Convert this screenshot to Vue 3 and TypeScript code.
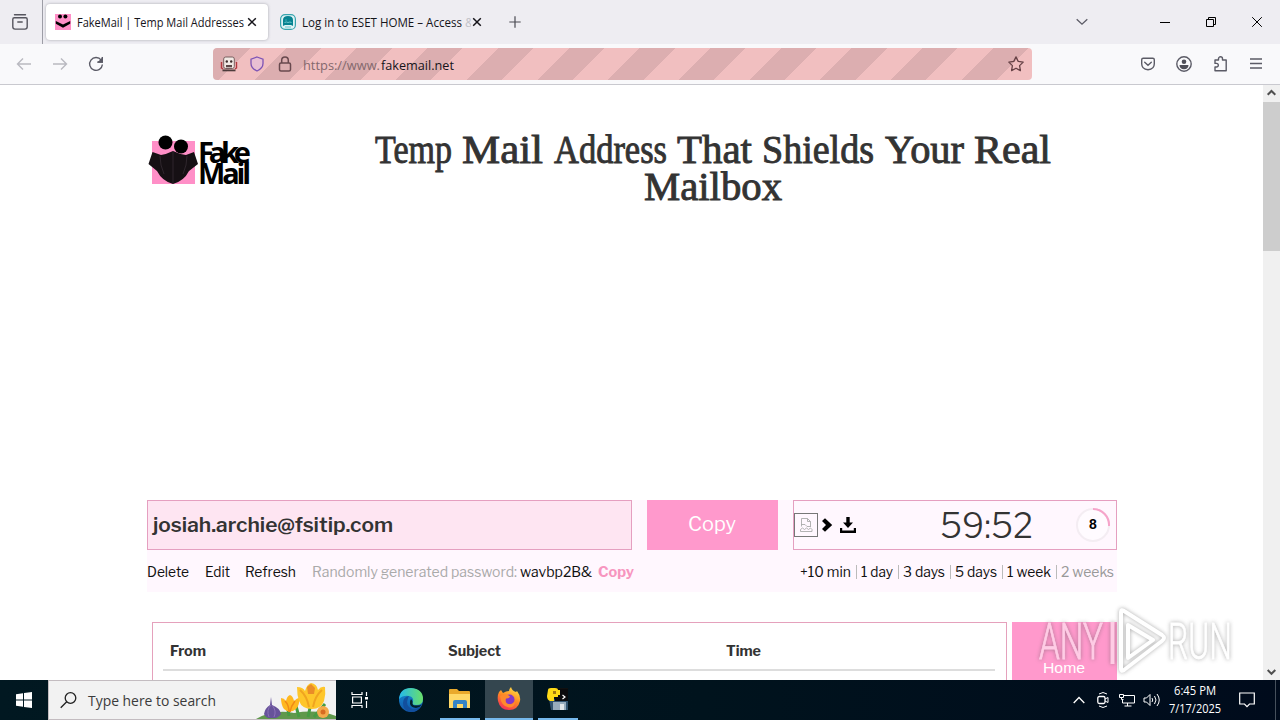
<script setup lang="ts">
import { h } from 'vue'

interface FitProps { t: string; w: number; b?: number; lh?: number }

// One line of text set to an exact advance width.
const Fit = (p: FitProps) =>
  h('svg', { width: p.w, height: p.lh ?? 20, style: 'display:block;flex:none;overflow:visible' }, [
    h('text', { x: 0, y: p.b ?? 15, textLength: p.w, lengthAdjust: 'spacingAndGlyphs', fill: 'currentColor' }, p.t),
  ])
Fit.props = ['t', 'w', 'b', 'lh']

const headline = [
  { t: 'Temp', w: 77 }, { t: 'Mail', w: 81 }, { t: 'Address', w: 113 }, { t: 'That', w: 75 },
  { t: 'Shields', w: 112 }, { t: 'Your', w: 79 }, { t: 'Real', w: 77 },
]
const actions = [{ t: 'Delete', w: 42 }, { t: 'Edit', w: 25 }, { t: 'Refresh', w: 51 }]
const periods = [
  { t: '+10 min', w: 51 }, { t: '1 day', w: 32 }, { t: '3 days', w: 42 },
  { t: '5 days', w: 42 }, { t: '1 week', w: 44 }, { t: '2 weeks', w: 53 },
]
const columns = [{ t: 'From', w: 36 }, { t: 'Subject', w: 53 }, { t: 'Time', w: 35 }]
</script>

<template>
  <div class="screen">
    <div class="tabs">
      <svg class="view" width="16" height="16" fill="none" stroke="#55555e" stroke-width="1.4">
        <path d="M2.5 .8h11M2.3 3.7h11.4q1.5 0 1.5 1.5v7.6q0 2.3-2.3 2.3H3.1q-2.3 0-2.3-2.3V5.2q0-1.5 1.5-1.5zM5.8 8h4.4" stroke-linecap="round" />
      </svg>
      <i class="sep"></i>
      <div class="tab active">
        <svg width="16" height="16">
          <rect width="16" height="16" fill="#ff8fc7" />
          <circle cx="5" cy="2.6" r="2" /><circle cx="10.4" cy="2.6" r="2" />
          <path d="M.8 7 8 10.500 15.200 7v2.800L8 13.800.8 9.800z" />
        </svg>
        <Fit t="FakeMail | Temp Mail Addresses" :w="167" />
        <svg class="x" width="10" height="10"><path d="M1.200 1.200l7.600 7.600M8.800 1.200 1.200 8.800" stroke="#15141a" stroke-width="1.500" /></svg>
      </div>
      <div class="tab second">
        <svg width="16" height="16">
          <rect x=".6" y=".6" width="14.8" height="14.800" rx="4.500" fill="#e0f3f5" stroke="#37a4ae" stroke-width="1.200" />
          <path d="M3 12V6q0-4 5-4t5 4v6l-2-1H5z" fill="#078391" />
          <path d="M4.500 8.500q2-1 3.500 0 2-1 3.500 0M5 13h6" stroke="#6bc6cd" stroke-width="1" fill="none" />
          <circle cx="6" cy="6" r=".8" fill="#46adb6" />
        </svg>
        <Fit t="Log in to ESET HOME – Access" :w="160" />
        <span class="faded">&amp;</span>
        <svg class="x" width="10" height="10"><path d="M1.200 1.200l7.600 7.600M8.800 1.200 1.200 8.800" stroke="#15141a" stroke-width="1.500" /></svg>
      </div>
      <svg class="plus" width="12" height="12"><path d="M6 .3v11.400M.3 6h11.400" stroke="#4a4a52" stroke-width="1.200" /></svg>
      <svg class="chev" width="12" height="8"><path d="M.7 1.200 6 6.200l5.300-5" fill="none" stroke="#5b5b66" stroke-width="1.300" /></svg>
      <svg class="win" width="10" height="10"><path d="M0 5.500h10" stroke="#000" /></svg>
      <svg class="win" width="10" height="10" fill="none" stroke="#000"><path d="M.5 2.500h7v7h-7zM2.500 2.500v-2h7v7h-2" /></svg>
      <svg class="win" width="10" height="10"><path d="M.2.2l9.600 9.600M9.800.2.2 9.800" stroke="#000" /></svg>
    </div>

    <div class="toolbar">
      <svg class="back" width="16" height="16" fill="none" stroke="#b9b9c0" stroke-width="1.400"><path d="M15 8H1.500M7 2.500 1.500 8 7 13.500" /></svg>
      <svg class="fwd" width="16" height="16" fill="none" stroke="#b9b9c0" stroke-width="1.400"><path d="M1 8h13.500M9 2.500 14.500 8 9 13.500" /></svg>
      <svg class="reload" width="16" height="16" fill="none" stroke="#5b5b66" stroke-width="1.400"><path d="M13.200 4.200A6.400 6.400 0 1 0 14.400 8.500M14.300 1v5H9.400" /><path d="M14.300 2.500V6h-3.500z" fill="#5b5b66" /></svg>
      <div class="url">
        <svg class="robot" width="18" height="16">
          <path d="M1.500 6v6l1.500 1M16.500 6v6l-1.500 1" stroke="#b3393e" stroke-width="1.400" fill="none" />
          <rect x="3.700" y="1" width="10.600" height="11.500" rx="2" fill="#f1e9e4" stroke="#6b5555" stroke-width=".9" />
          <circle cx="6.800" cy="5.500" r="1.200" fill="#3c2b2b" /><circle cx="11.200" cy="5.500" r="1.200" fill="#3c2b2b" />
          <path d="M6 9h6v2.300H6z" fill="#5d4747" /><path d="M2.500 13.500h13v1.800h-13z" fill="#4d3b3b" />
        </svg>
        <svg class="shield" width="14" height="16" fill="#e9bfd3" stroke="#7d54b5" stroke-width="1.300"><path d="M7 1l6 2.200v4.300q0 4.700-6 7.500-6-2.800-6-7.500V3.200z" /></svg>
        <svg class="lock" width="14" height="16" fill="none" stroke="#68494e" stroke-width="1.500"><rect x="1.500" y="7" width="11" height="8" rx="1.500" /><path d="M3.700 7V4.300a3.300 3.300 0 0 1 6.600 0V7" /></svg>
        <Fit class="scheme" t="https://www." :w="77" :b="16" />
        <Fit class="host" t="fakemail.net" :w="73" :b="16" />
        <svg class="star" width="16" height="16" fill="none" stroke="#674347" stroke-width="1.300" stroke-linejoin="round"><path d="M8 .9l2.200 4.500 5 .7-3.600 3.500.8 5L8 12.200l-4.400 2.400.8-5L.8 6.100l5-.7z" /></svg>
      </div>
      <svg class="pocket" width="14" height="16" fill="none" stroke="#5b5b66" stroke-width="1.400"><path d="M2.200 2.300h9.600q1.500 0 1.500 1.500v4q0 5.500-6.300 6-6.300-.5-6.300-6v-4q0-1.500 1.500-1.500zM3.700 6.300 7 9.300l3.300-3" stroke-linecap="round" /></svg>
      <svg class="account" width="16" height="16"><circle cx="8" cy="8" r="7.200" fill="none" stroke="#5b5b66" stroke-width="1.400" /><circle cx="8" cy="5.800" r="2.300" fill="#4e4e58" /><path d="M3.500 9h9q0 4-4.500 4.300Q3.500 13 3.500 9z" fill="#4e4e58" /></svg>
      <svg class="puzzle" width="15" height="16" fill="none" stroke="#5b5b66" stroke-width="1.400" stroke-linejoin="round"><path d="M5.500 4V2.800a2 2 0 0 1 4 0V4h3.700v10.800H2V11h1.500a1.800 1.800 0 0 0 0-3.600H2V4z" /></svg>
      <svg class="menu" width="12" height="11"><path d="M0 1h12M0 5.500h12M0 10h12" stroke="#5b5b66" stroke-width="1.300" /></svg>
    </div>

    <div class="viewport">
      <main class="page">
        <header>
          <svg class="logo" width="105" height="52">
            <rect x="5" y="6" width="43" height="43" fill="#ff8fc7" />
            <path d="M5.500 17 14 20Q20 19 26 16q6 3 13 4l8-3 4 12-9 7q-5 10-16 13-11-3-16-13L1.500 29z" fill="#161014" />
            <path d="M26 17v31M13 21q0 9 4 18M40 21q0 9-4 18" stroke="#3a2f36" stroke-width=".7" fill="none" />
            <circle cx="18.500" cy="7.500" r="7" /><circle cx="34" cy="11.500" r="7" />
            <g class="brand">
              <text x="51" y="28" textLength="53">Fake</text>
              <text x="51" y="49" textLength="53">Mail</text>
            </g>
          </svg>
          <h1>
            <span class="line"><Fit v-for="w in headline" :key="w.t" :t="w.t" :w="w.w" :lh="37" :b="32" /></span>
            <span class="line"><Fit t="Mailbox" :w="138" :lh="37" :b="32" /></span>
          </h1>
        </header>

        <section class="mailbox">
          <div class="controls">
            <div class="address"><Fit t="josiah.archie@fsitip.com" :w="240" :lh="30" :b="22" /></div>
            <div class="copy"><Fit t="Copy" :w="48" :lh="30" :b="21" /></div>
            <div class="timer">
              <svg class="qr" width="25" height="25" fill="none">
                <rect x=".5" y=".5" width="23" height="23" stroke="#777" />
                <path d="M7.500 13.500v-8h6l3 3v5M13.500 5.500v3h3M7 11.500h4l2 2h4M6.500 18.500v-2l2-1.500 2 1.500 2-1.500 2 1.500 2-1.500 1.500 1.500v2z" stroke="#aaa" stroke-width=".9" />
              </svg>
              <svg class="arrow" width="12" height="14"><path d="M1 3 4 .3 11.200 7 4 13.700 1 11l4-4z" /></svg>
              <svg class="load" width="16" height="16"><path d="M6.300 0h3.400v5.500H13L8 11 3 5.500h3.300zM0 11h2.200v2.500h11.600V11H16v5H0z" /></svg>
              <div class="clock"><Fit t="59:52" :w="93" :lh="40" :b="33" /></div>
              <svg class="ring" width="36" height="36">
                <circle cx="18" cy="18" r="16" fill="#fffbff" stroke="#f4edf3" stroke-width="2" />
                <path d="M18 2a16 16 0 0 1 16 17" fill="none" stroke="#f6a4ca" stroke-width="2" />
                <text x="18" y="22.300" text-anchor="middle">8</text>
              </svg>
            </div>
          </div>
          <div class="links">
            <Fit v-for="a in actions" :key="a.t" :t="a.t" :w="a.w" />
            <Fit class="muted" t="Randomly generated password:" :w="205" />
            <Fit class="password" t="wavbp2B&amp;" :w="72" />
            <Fit class="recopy" t="Copy" :w="36" />
            <div class="periods">
              <template v-for="(p, i) in periods" :key="p.t">
                <i v-if="i"></i><Fit :t="p.t" :w="p.w" />
              </template>
            </div>
          </div>
        </section>

        <section class="inbox">
          <div class="table">
            <div class="row"><div v-for="c in columns" :key="c.t"><Fit :t="c.t" :w="c.w" /></div></div>
          </div>
          <nav><Fit t="Home" :w="42" /></nav>
        </section>
      </main>
      <div class="scroll">
        <svg width="17" height="17"><path d="M4.700 9.800 8.500 6l3.800 3.800" fill="none" stroke="#505050" stroke-width="2" /></svg>
        <i></i>
        <svg class="down" width="17" height="17"><path d="M4.700 7l3.800 3.800L12.300 7" fill="none" stroke="#505050" stroke-width="2" /></svg>
      </div>
    </div>

    <div class="taskbar">
      <div class="start"><svg width="16" height="16" fill="#fff"><path d="M0 2.300 7 1.300V7.600H0zM8 1.100 16 0v7.600H8zM0 8.500h7v6.300l-7-1zM8 8.500h8V16l-8-1.100z" /></svg></div>
      <div class="search">
        <svg class="glass" width="17" height="17" fill="none" stroke="#222" stroke-width="1.300"><circle cx="10.500" cy="6" r="5.300" /><path d="M6.700 9.800.7 15.800" /></svg>
        <Fit t="Type here to search" :w="128" :b="16" />
        <svg class="flowers" width="80" height="38">
          <path d="M0 38q18-10 38-6 24-4 42 3v3z" fill="#60984c" />
          <path d="M33 35 31 23M52 36l3-14M43 36 40 25M58 36l11-13" stroke="#469c43" stroke-width="3" />
          <path d="M15 16l1 8q8 3 9 9-3 5-9 4-6 1-8-4 1-6 6-9z" fill="#67529a" /><path d="M15 24q-5 5-2 12M16 24q5 6 2 12" stroke="#8a70b7" fill="none" />
          <path d="M25 17q3 0 5 3 1-5 4-6 3 1 4 6 3-3 5-3 1 7-3 11-6 5-12 0-3-4-3-11z" fill="#ffb820" /><path d="M29 20q4 4 4 11M39 20q-4 5-5 11" stroke="#ef8a17" stroke-width="1.500" fill="none" />
          <path d="M41 6q6 0 8 4 2-7 6-8 6 1 7 7 3-4 7-3 1 7-1 14-3 8-12 8-10 0-13-8-2-6-2-14z" fill="#fec62b" /><path d="M44 9q7 6 9 17M66 9q-7 6-9 17" stroke="#f0a420" stroke-width="2" fill="none" /><path d="M51 6l4-3 4 4-1 6h-6z" fill="#ea8c28" />
          <circle cx="67" cy="31" r="6" fill="#f4aa4c" /><circle cx="67" cy="31" r="2.500" fill="#d76b22" />
        </svg>
      </div>
      <div class="app"><svg width="18" height="16" fill="none" stroke="#fff" stroke-width="1.200"><path d="M1 0v2.500h10V0M1 16v-2.500h10V16M1.600 5h8.800v6H1.600zM15.500 0v4M15.500 9v7" /><path d="M14 5h3v2.500h-3z" fill="#fff" stroke="none" /></svg></div>
      <div class="app edge"><svg width="26" height="26">
        <defs><linearGradient id="eg"><stop offset="0" stop-color="#24b9ed" /><stop offset="1" stop-color="#69df69" /></linearGradient><linearGradient id="eb" x2="0" y2="1"><stop offset="0" stop-color="#1590d4" /><stop offset="1" stop-color="#1157aa" /></linearGradient></defs>
        <circle cx="13" cy="13" r="12" fill="url(#eb)" />
        <path d="M1 12Q2 1 13 1q12 1 12 11 0 6-7 6-5 0-3-3 1-5-4-6-6-1-10 3z" fill="url(#eg)" />
        <path d="M10 11q-3 8 4 11 5 1 9-3-3 6-10 6Q5 24 5 16q0-6 6-7z" fill="#124f9d" />
        <path d="M13 12q2 2 1.500 4-.5 3 5 2.500 3 0 4.500-1-2 3-6 3.500-5-.5-6-4-.5-3 1-5z" fill="#03212b" />
      </svg></div>
      <div class="app open"><svg width="24" height="22">
        <path d="M1 2q0-1 1-1h7l2 2h10q1 0 1 1v16H1z" fill="#e9a92c" /><path d="M1 6h21v14H1z" fill="#ffd867" />
        <path d="M5 20v-6q0-2 2-2h10q2 0 2 2v6h-4v-4H9v4z" fill="#3684c5" />
      </svg></div>
      <div class="app wide"><svg width="24" height="24">
        <defs><linearGradient id="ff" x1=".8" y1="0" x2=".3" y2="1"><stop offset="0" stop-color="#ffe34a" /><stop offset=".5" stop-color="#ff8a22" /><stop offset="1" stop-color="#f72e59" /></linearGradient></defs>
        <path d="M2 5 4 3l2 3q3-2 6-2 0-2 2-4 1 4 5 5l1-1q4 5 3 10-2 9-11 9T1 14Q0 9 2 5z" fill="url(#ff)" />
        <circle cx="12.500" cy="12.500" r="5" fill="#8437c8" /><path d="M3 9q4-3 8-1l2 1.500q-1 2.500-4 2-1 3 1 5 5 2 8-2 0 6-6 6-8-1-9-11.500z" fill="#ff8a2d" />
      </svg></div>
      <div class="app open py"><svg width="24" height="24">
        <path d="M9 1h13v14H9z" fill="#111" /><path d="M3 12l19 1v10H5z" fill="#31536f" /><path d="M7 15h13v8H7z" fill="#97acbd" /><path d="M14 17h4v6h-4z" fill="#e1e6e9" />
        <path d="M9 2h13v12H9z" fill="#0a0a0c" /><path d="M2 3q0-2 3-2h4q3 0 3 2h2v5h-2v2H8v4H4q-3-1-3-5z" fill="#ffdb17" /><path d="M7 4h3v3H7z" fill="#a47a12" /><path d="m16.500 8 2.500 2-2.500 2" fill="none" stroke="#fff" stroke-width="1.200" />
      </svg></div>
      <div class="tray">
        <svg width="12" height="8"><path d="M.7 7 6 1.500 11.300 7" fill="none" stroke="#fff" stroke-width="1.300" /></svg>
        <svg class="cam" width="12" height="16" fill="none" stroke="#fff"><path d="M2 2q4-3 8 0M2 14q4 3 8 0" /><rect x=".8" y="4.500" width="7.200" height="7" rx="1.500" stroke-width="1.300" /><path d="M8 7l3-1.500v5L8 9" /></svg>
        <svg class="net" width="16" height="14" fill="none" stroke="#fff"><path d="M5 2.500h10.500v7.500h-12V6M8.500 10v3M5.500 13h7M.5 1.500h4v3h-4zM2.500 4.500v2h2" /></svg>
        <svg class="vol" width="17" height="14" fill="none" stroke="#fff"><path d="M1 5h2.500L7 1.500v11L3.500 9H1zM9 5q1.500 2 0 4M11.500 3q3 4 0 8M14 1q4.500 6 0 12" /></svg>
        <div class="date"><Fit t="6:45 PM" :w="42" :lh="18" :b="13" /><Fit t="7/17/2025" :w="52" :lh="18" :b="13" /></div>
        <svg class="note" width="16" height="16" fill="none" stroke="#fff" stroke-width="1.200"><path d="M.7 1h14.600v11H10.500L8 14.700 5.500 12H.7z" /></svg>
        <i></i>
      </div>
    </div>

    <svg class="watermark" width="204" height="72">
      <g class="mark">
        <text x="3" y="51" textLength="64" lengthAdjust="spacingAndGlyphs">ANY</text>
        <path d="M76.500 14v42M85 4q0-3 3-1l38 24q4 3 0 6L88 62q-3 2-3-1zM92 17v33l25-18z" fill="none" stroke="#fff" stroke-width="4" stroke-linejoin="round" />
        <text x="132" y="51" textLength="64" lengthAdjust="spacingAndGlyphs">RUN</text>
      </g>
    </svg>
  </div>
</template>

<style>
html, body { margin: 0; overflow: hidden; }
</style>

<style scoped>
.screen { position: relative; width: 1280px; height: 720px; overflow: hidden; background: #fff; font: 12px "Open Sans", "Noto Sans", sans-serif; color: #15141a; }
svg { display: block; flex: none; overflow: visible; }
.tabs { display: flex; align-items: center; height: 44px; padding-right: 18px; box-sizing: border-box; background: #eeedf2; }
.view { margin-left: 12px; }
.sep { width: 1px; height: 44px; margin: 0 4px 0 14px; background: #9d9da6; }
.tab { display: flex; align-items: center; gap: 6px; }
.active { width: 222px; height: 36px; box-sizing: border-box; padding-left: 9px; border-radius: 4px; background: #fff; box-shadow: 0 0 3px #77778299; margin-left: -1px; }
.active .x { margin-left: -3px; }
.second { margin-left: 12px; }
.second .faded { width: 6px; margin-left: -3px; overflow: hidden; color: #c2c2c8; }
.second .x { margin-left: -5px; }
.plus { margin-left: 27px; }
.chev { margin-left: auto; margin-right: 36px; }
.win { margin-left: 36px; }
.toolbar { display: flex; align-items: center; height: 41px; padding-bottom: 1px; box-sizing: border-box; background: #f9f9fb; border-bottom: 1px solid #c9c9cf; }
.back { margin-left: 16px; }
.fwd { margin-left: 20px; }
.reload { margin-left: 20px; }
.url { display: flex; align-items: center; width: 819px; height: 32px; box-sizing: border-box; margin-left: 109px; padding: 0 8px 0 7px; border-radius: 4px; background: repeating-linear-gradient(-45deg, #f1bfc0 0 25px, #dcaeb0 25px 50px); font-size: 13.5px; }
.shield { margin-left: 12px; }
.lock { margin-left: 14px; }
.scheme { margin-left: 11px; color: #83686d; }
.host { margin-left: 1px; }
.star { margin-left: auto; }
.pocket { margin-left: 109px; }
.account { margin-left: 21px; }
.puzzle { margin-left: 21px; }
.menu { margin-left: 22px; }
.viewport { display: flex; height: 595px; overflow: hidden; }
.page { width: 970px; margin-left: 147px; font-family: "Libre Franklin", "Inter", "Liberation Sans", sans-serif; }
header { display: flex; height: 415px; }
.logo { margin-top: 50px; }
.brand { font: bold 29px "Open Sans", sans-serif; }
h1 { width: 676px; margin: 46px 0 0 123px; font: 400 40px "Liberation Serif", serif; color: #333; stroke: #333; stroke-width: .9; }
.line { display: flex; justify-content: space-between; }
.line + .line { justify-content: center; }
.mailbox { height: 92px; background: #fff7fe; }
.controls { display: flex; height: 50px; gap: 15px; }
.address, .copy, .timer { display: flex; align-items: center; box-sizing: border-box; }
.address { width: 485px; padding-left: 5px; border: 1px solid #e59fc0; background: #fee5f2; font-size: 20px; font-weight: 600; color: #333; }
.copy { width: 130px; padding-right: 1px; width: 131px; justify-content: center; background: #ff99cc; color: #fff; font-size: 20px; font-weight: 400; }
.timer { width: 324px; border: 1px solid #e59fc0; }
.arrow { margin-left: 2px; }
.load { margin-left: 7px; }
.clock { margin-left: 84px; color: #333; font-size: 35px; font-weight: 300; }
.ring { margin-left: auto; margin-right: 5px; font: bold 14px "Liberation Sans", sans-serif; }
.links { display: flex; align-items: center; height: 42px; gap: 15.5px; font-size: 14px; color: #111; }
.links > svg { margin-top: 2px; }
.muted { color: #aaa; }
.password { margin-left: -12px; }
.recopy { margin-left: -10px; color: #f795bf; font-weight: 700; }
.periods { display: flex; align-items: center; gap: 4.5px; margin: 2px 3px 0 auto; }
.periods i { width: 1px; height: 14px; background: #bbb; }
.periods svg:last-child { color: #999; }
.inbox { display: flex; gap: 5px; height: 80px; margin-top: 30px; padding-left: 5px; }
.table { width: 855px; box-sizing: border-box; padding: 0 11px 0 10px; border: 1px solid #e5a1bc; }
.row { display: grid; grid-template-columns: 278px 278px 1fr; align-items: center; height: 48px; padding: 10px 0 0 7px; box-sizing: border-box; border-bottom: 2px solid #ddd; font-size: 14px; font-weight: 700; color: #333; }
nav { width: 105px; padding: 36px 0 0 31px; box-sizing: border-box; background: #ff99cc; color: #fff; font: 15px "Liberation Sans", sans-serif; }
.scroll { display: flex; flex-direction: column; width: 17px; margin-left: auto; background: #f0f0f0; }
.scroll i { height: 149px; background: #cdcdcd; }
.down { margin-top: auto; }
.taskbar { display: flex; height: 40px; background: linear-gradient(90deg, #011821, #00131d 55%, #000b1c); color: #fff; }
.start { display: flex; width: 48px; align-items: center; justify-content: center; }
.search { display: flex; align-items: center; width: 288px; box-sizing: border-box; padding-left: 11px; border: solid #c3bcc0; border-width: 1px 0 1px 1px; background: #f2f2f2; color: #3b3b3b; font-size: 15px; }
.glass { margin-right: 11px; }
.flowers { margin-left: auto; }
.app { display: flex; align-items: center; justify-content: center; width: 48px; box-sizing: border-box; }
.edge { margin: 0 5px 0 3px; }
.open { width: 40px; border-bottom: 2px solid #76b9ed; }
.edge + .open { margin-right: 5px; }
.wide { background: #34464f; border-bottom: 2px solid #76b9ed; }
.py { margin-left: 5px; }
.tray { display: flex; align-items: center; margin-left: auto; }
.cam { margin-left: 12px; }
.net { margin-left: 10px; }
.vol { margin-left: 8px; }
.date { display: flex; flex-direction: column; align-items: center; margin-left: 9px; }
.note { margin-left: 18px; }
.tray i { width: 1px; height: 40px; margin: 0 4px 0 20px; background: #46505c; }
.watermark { position: absolute; left: 1036px; top: 608px; }
.mark { opacity: .5; filter: drop-shadow(0 0 2px #555); fill: #fff; stroke: #fff; stroke-width: .8; font: 300 50px Roboto, sans-serif; }
</style>
